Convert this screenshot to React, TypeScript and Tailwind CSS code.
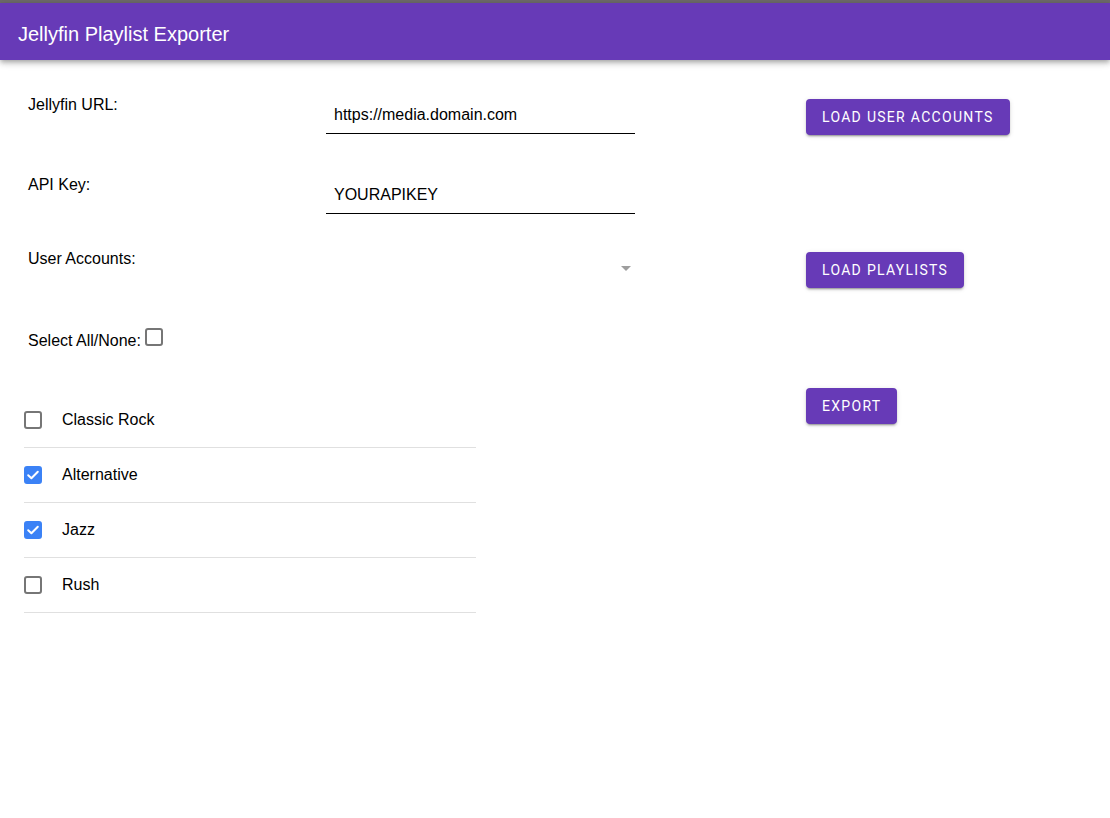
import React, { useState } from "react";

const playlists = [
  { name: "Classic Rock", checked: false },
  { name: "Alternative", checked: true },
  { name: "Jazz", checked: true },
  { name: "Rush", checked: false },
];

const Box = ({ checked, className = "" }: { checked: boolean; className?: string }) => (
  <span
    className={
      "flex h-[18px] w-[18px] shrink-0 items-center justify-center rounded-[3px] border-2 " +
      (checked ? "border-[#3b82f6] bg-[#3b82f6]" : "border-[#767676] bg-white") +
      " " +
      className
    }
  >
    {checked && (
      <svg width="14" height="14" viewBox="0 0 14 14" fill="none">
        <path d="M2.2 7.2 5.4 10.3 11.8 3.8" stroke="white" strokeWidth="2" strokeLinecap="round" strokeLinejoin="round" />
      </svg>
    )}
  </span>
);

const Button = ({ children, className = "" }: { children: React.ReactNode; className?: string }) => (
  <button
    className={
      "flex h-9 items-center rounded-[4px] bg-[#673ab7] px-4 text-[14px] font-normal uppercase tracking-[1.3px] text-white shadow-[0px_3px_1px_-2px_rgba(0,0,0,0.2),0px_2px_2px_0px_rgba(0,0,0,0.14),0px_1px_5px_0px_rgba(0,0,0,0.12)] " +
      className
    }
    style={{ fontFamily: "Roboto, 'Liberation Sans', sans-serif" }}
  >
    {children}
  </button>
);

export default function App() {
  const [items] = useState(playlists);

  return (
    <div className="min-h-[818px] bg-white text-black" style={{ fontFamily: "'Liberation Sans', Arial, sans-serif" }}>
      <div className="h-[3px] bg-[#6d6a6a]" />
      <header className="relative z-10 flex h-[57px] items-center bg-[#673ab7] pl-[18px] pt-1 shadow-[0px_2px_4px_-1px_rgba(0,0,0,0.2),0px_4px_5px_0px_rgba(0,0,0,0.14),0px_1px_10px_0px_rgba(0,0,0,0.12)]">
        <h1 className="text-[20px] leading-8 text-white">Jellyfin Playlist Exporter</h1>
      </header>

      <main className="flex">
        <div className="w-[806px] pt-[33px]">
          <div className="pl-[28px] text-[16px] leading-6">
            <div className="flex h-[80px] items-start">
              <label className="w-[298px]">Jellyfin URL:</label>
              <div className="mt-[6px] w-[309px] border-b border-black pb-[6px] pl-2 pt-1">https://media.domain.com</div>
            </div>
            <div className="flex h-[74px] items-start">
              <label className="w-[298px]">API Key:</label>
              <div className="mt-[6px] w-[309px] border-b border-black pb-[6px] pl-2 pt-1">YOURAPIKEY</div>
            </div>
            <div className="flex h-[82px] items-start">
              <label className="w-[298px]">User Accounts:</label>
              <div className="mt-[19px] flex w-[309px] justify-end pr-[4px]">
                <svg width="10" height="5" viewBox="0 0 10 5">
                  <path d="M0 0h10L5 5z" fill="#9e9e9e" />
                </svg>
              </div>
            </div>
            <div className="flex h-[64px] items-start">
              <span>Select All/None:</span>
              <Box checked={false} className="-mt-px ml-[4px] h-[17px] w-[17px]" />
            </div>
          </div>

          <ul className="ml-[24px] w-[452px] text-[16px] leading-6">
            {items.map((p) => (
              <li key={p.name} className="flex h-[55px] items-center border-b border-[#e0e0e0]">
                <Box checked={p.checked} />
                <span className="ml-[20px]">{p.name}</span>
              </li>
            ))}
          </ul>
        </div>

        <div className="flex flex-col items-start">
          <Button className="mt-[39px]">Load User Accounts</Button>
          <Button className="mt-[117px]">Load Playlists</Button>
          <Button className="mt-[100px]">Export</Button>
        </div>
      </main>
    </div>
  );
}
